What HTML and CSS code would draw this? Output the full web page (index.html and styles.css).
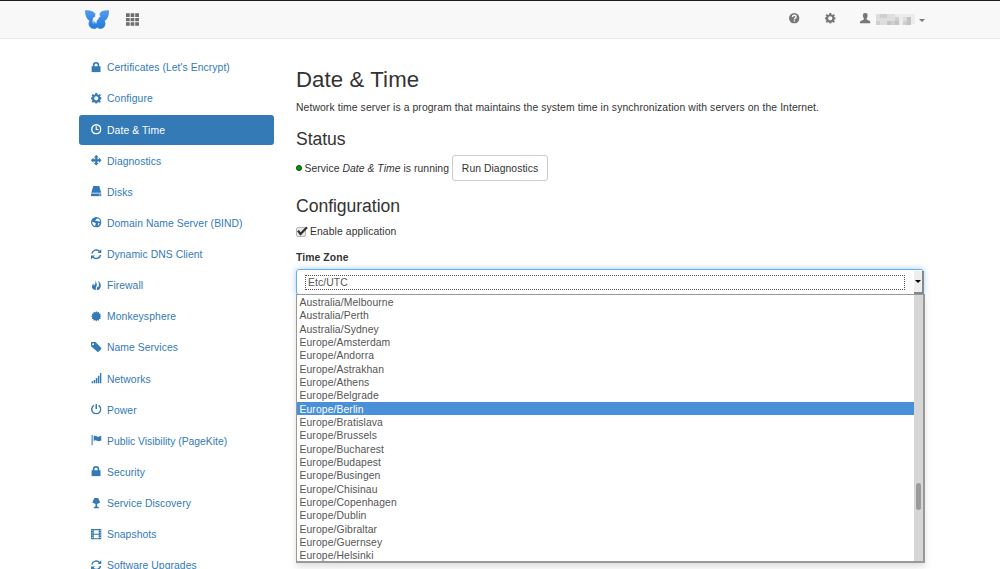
FILE: index.html
```html
<!DOCTYPE html>
<html lang="en">
<head>
<meta charset="utf-8">
<title>Date &amp; Time</title>
<link rel="stylesheet" href="styles.css">
</head>
<body>
<svg class="defs" width="0" height="0">
  <symbol id="lock" viewBox="0 0 14 14"><path d="M.8 5.800h1.600V4.300a4.300 4.300 0 0 1 8.600 0v1.500h1.700v7.700H.8zM4.600 5.800h4.200V4.200a2.100 2.100 0 0 0-4.200 0z" fill-rule="evenodd"/></symbol>
  <symbol id="cog" viewBox="0 0 14 14"><path fill-rule="evenodd" d="M5.800 0h2.400l.4 2 1.200.5 1.700-1.200 1.700 1.700L12 4.700l.5 1.100 1.900.3v2.100l-1.900.4-.5 1.100 1.200 1.800-1.700 1.600-1.700-1.100-1.200.5-.4 1.900H5.800l-.4-1.900-1.200-.5-1.700 1.100L.8 11.500 2 9.700l-.5-1.100-1.900-.4V6.100l1.900-.3L2 4.700.8 3l1.700-1.700 1.700 1.200L5.400 2zM7 4.300a2.800 2.800 0 1 0 0 5.600 2.800 2.800 0 0 0 0-5.600z"/></symbol>
  <symbol id="clock" viewBox="0 0 14 14"><circle cx="7" cy="7" r="6" fill="none" stroke="currentColor" stroke-width="1.900"/><path d="M6.200 3h1.500v3.500H10V8H6.200z"/></symbol>
  <symbol id="move" viewBox="0 0 14 14"><path fill-rule="evenodd" d="M7-.3l3.200 3.600H8.200v2.500h2.500V3.800L14.300 7l-3.600 3.200V8.200H8.200v2.500h2L7 14.300l-3.200-3.600h2V8.200H3.300v2L-.3 7l3.600-3.200v2h2.500V3.300h-2z"/><path d="M7 3.500L10.500 7 7 10.500 3.500 7z" fill="none" stroke="currentColor" stroke-width="1"/></symbol>
  <symbol id="disk" viewBox="0 0 14 14"><path d="M3 0h8l2.600 9H.4z"/><path fill-rule="evenodd" d="M0 10h14v3.500H0zM10.500 11.200v1h2v-1z"/></symbol>
  <symbol id="globe" viewBox="0 0 14 14"><path fill-rule="evenodd" d="M7 0a7 7 0 1 0 0 14A7 7 0 0 0 7 0zM8 1.500c2.500.4 4.200 2.500 4.400 4.800L11 5.500 9.700 6 8.500 4.800 6.700 5.500 5.600 4.300l1.600-1zM1.700 6.400l2.300.5 2.500 1.500-.6 1.700-.4 2.200C3 11.500 1.300 9 1.700 6.400zm7.800 1.900l2-.3c-.3 1.700-1.200 2.900-2.500 3.700z"/></symbol>
  <symbol id="refresh" viewBox="0 0 14 14"><path d="M1.200 6a5.900 5.900 0 0 1 10.200-2.700M12.800 8a5.900 5.900 0 0 1-10.200 2.700" fill="none" stroke="currentColor" stroke-width="1.900"/><path d="M14 0v5.200H8.800zM0 14V8.800h5.200z"/></symbol>
  <symbol id="fire" viewBox="0 0 14 14"><path d="M5.700 0c.5 2.500 2.400 4 2.100 6.600C7.600 8.500 6 9 6.500 13.700 3.500 13 1 11.200 1.200 8.500c.1-1.700 1.200-2.500 1.800-4 .7 1.100.9 2.300.6 3.600C5.700 6.100 6.500 3.500 5.700 0z"/><path d="M9.300 1c3.200 2.200 4.400 5 3.500 8.500-.6 2-2.200 3.600-4.700 4.300C6.900 11.600 8 10 9.200 8.300c.3.700.3 1.300.1 2C11 8 11.100 4.700 9.300 1z"/></symbol>
  <symbol id="cert" viewBox="0 0 14 14"><path d="M7 0l1.370 1.880 2.130-.94.25 2.310 2.310.25-.94 2.130L14 7l-1.880 1.370.94 2.130-2.310.25-.25 2.310-2.130-.94L7 14l-1.370-1.880-2.130.94-.25-2.310-2.310-.25.94-2.130L0 7l1.880-1.370L.94 3.500l2.310-.25L3.500.94l2.130.94z"/></symbol>
  <symbol id="tag" viewBox="0 0 14 14"><path fill-rule="evenodd" d="M0 0h6l8.500 8.500-5.200 5.300L0 5.800zM2.800 1.600a1.300 1.300 0 1 0 0 2.600 1.300 1.300 0 0 0 0-2.600z"/></symbol>
  <symbol id="signal" viewBox="0 0 14 14"><path d="M.8 11h2v3h-2zM3.600 9.300h2V14h-2zM6.400 6.500h2V14h-2zM9.200 3.500h2V14h-2zM12 0h2.200v14H12z"/></symbol>
  <symbol id="power" viewBox="0 0 14 14"><path d="M4 1.800a6 6 0 1 0 6 0" fill="none" stroke="currentColor" stroke-width="1.900"/><path d="M6 0h2v6.500H6z"/></symbol>
  <symbol id="flag" viewBox="0 0 14 14"><path d="M.8 0h1.400v14H.8zM3.500 1.500c3-2 4 1.200 6.300.8 1.600-.2 2.500-1 4.200-1.400v6.500c-2.200.8-4.100 1.600-6 .4-1.500-1-2.900-1-4.500.1z"/></symbol>
  <symbol id="lamp" viewBox="0 0 14 14"><path d="M4.500 0h5l2.700 5.500c-1 1.500-3.400 2-4 2V10c0 1.200.5 2 2.600 2.500V14H3.500v-1.500C5.600 12 6 11.200 6 10V7.500c-.8 0-3.300-.7-4.200-2z"/></symbol>
  <symbol id="film" viewBox="0 0 14 14"><path fill-rule="evenodd" d="M0 0h14v14H0zM1 1.500v1.300h1.300V1.500zm0 3v1.300h1.300V4.500zm0 3v1.300h1.300V7.500zm0 3v1.500h1.300v-1.500zM3.700 1.500v4.700h6.600V1.500zm0 6.200v4.700h6.600V7.700zm8-6.200v1.300H13V1.500zm0 3v1.300H13V4.500zm0 3v1.300H13V7.500zm0 3v1.500H13v-1.500z"/></symbol>
  <symbol id="question" viewBox="0 0 14 14"><circle cx="7" cy="7" r="7"/><path d="M4.600 5.300C4.700 2.200 9.600 2.300 9.400 5.100 9.300 6.800 7.200 6.700 7.200 8.600M7.200 9.700v1.700" fill="none" stroke="#f8f8f8" stroke-width="1.900"/></symbol>
  <symbol id="user" viewBox="0 0 14 14"><path d="M7 0c2.400 0 3.400 1.700 3.100 4-.2 1.700-.7 2.500-1.300 3.200v1.500l4.200 1.900c.8.400 1 .9 1 2.200V14H0v-1.200c0-1.300.2-1.800 1-2.200l4.200-1.900V7.200C4.600 6.500 4.100 5.700 3.900 4 3.600 1.700 4.600 0 7 0z"/></symbol>
</svg>

<header class="navbar">
  <div class="container navbar-inner">
    <svg class="brand" viewBox="0 0 24 19">
      <defs><linearGradient id="wing" x2="0" y2="1"><stop offset="0" stop-color="#549cec"/><stop offset="1" stop-color="#1f7bdd"/></linearGradient></defs>
      <path fill="url(#wing)" d="M0 .5C3-.3 7.500.6 9.500 2.800L10.800 4.500 9.800 5.600l2 .2.700 1.200.8-1.200 1.800-.3L14 4.500l1.200-1.800C17 .6 21 .1 24 .5c.2 4.500-1.200 8.300-4.400 10.400 2 2.300.4 7.300-3.600 7.900-1.900.3-3.300-.7-3.800-1.500-.8 1.300-2.100 1.800-4 1.500-4-.5-5.900-5.500-3.700-7.800C1.500 9-.1 5.200 0 .5z"/>
      <path fill="#f8f8f8" d="M9.500 4.200l1.700.8 1.200-1.200 1.400 1 1.500-.5-.6 1.500 1 .9-1.700.6-.6 1.800-1.500 1.400-.7 3.500-.5-2.500-.5 2.500-.6-3.500-.7 4-.5-4-1 3 .5-5 1.400-1.500 1.400-1z"/>
    </svg>
    <svg class="apps" viewBox="0 0 13 13"><path d="M0 .3h3.700V4H0zm4.600 0h3.700V4H4.600zm4.600 0H13V4H9.200zM0 4.900h3.700v3.400H0zm4.600 0h3.700v3.400H4.600zm4.600 0H13v3.400H9.200zM0 9.200h3.700v3.500H0zm4.600 0h3.700v3.500H4.600zm4.600 0H13v3.500H9.200z"/></svg>
    <div class="navbar-right">
      <svg class="icon"><use href="#question"/></svg>
      <svg class="icon"><use href="#cog"/></svg>
      <div class="account">
        <svg class="icon"><use href="#user"/></svg>
        <svg class="masked" viewBox="0 0 39 11"><path fill="#dedede" d="M0 0h31v11H0z"/><path fill="#d0d0d0" d="M4 0h7v4H4zM0 7h4v4H0zM15 7h4v4h-4zM27 7h8v4h-8zM19 3h4v4h-4z"/><path fill="#c3c3c3" d="M11 7h4v4h-4zM19 7h4v4h-4zM31 3h4v8h-4z"/><path fill="#ececec" d="M19 0h20v3H19zM23 3h4v8h-4zM35 3h4v7h-4z"/></svg>
        <span class="caret"></span>
      </div>
    </div>
  </div>
</header>

<div class="container page">
  <nav class="sidebar">
    <a class="item narrow"><svg class="icon"><use href="#lock"/></svg>Certificates (Let's Encrypt)</a>
    <a class="item"><svg class="icon"><use href="#cog"/></svg>Configure</a>
    <a class="item active"><svg class="icon"><use href="#clock"/></svg>Date &amp; Time</a>
    <a class="item narrow"><svg class="icon"><use href="#move"/></svg>Diagnostics</a>
    <a class="item narrow"><svg class="icon"><use href="#disk"/></svg>Disks</a>
    <a class="item narrow"><svg class="icon"><use href="#globe"/></svg>Domain Name Server (BIND)</a>
    <a class="item narrow"><svg class="icon"><use href="#refresh"/></svg>Dynamic DNS Client</a>
    <a class="item narrow"><svg class="icon"><use href="#fire"/></svg>Firewall</a>
    <a class="item"><svg class="icon"><use href="#cert"/></svg>Monkeysphere</a>
    <a class="item narrow"><svg class="icon"><use href="#tag"/></svg>Name Services</a>
    <a class="item narrow"><svg class="icon"><use href="#signal"/></svg>Networks</a>
    <a class="item narrow"><svg class="icon"><use href="#power"/></svg>Power</a>
    <a class="item narrowest"><svg class="icon"><use href="#flag"/></svg>Public Visibility (PageKite)</a>
    <a class="item narrow"><svg class="icon"><use href="#lock"/></svg>Security</a>
    <a class="item narrow"><svg class="icon"><use href="#lamp"/></svg>Service Discovery</a>
    <a class="item narrow"><svg class="icon"><use href="#film"/></svg>Snapshots</a>
    <a class="item narrow"><svg class="icon"><use href="#refresh"/></svg>Software Upgrades</a>
  </nav>

  <main class="content">
    <h2>Date &amp; Time</h2>
    <p class="intro">Network time server is a program that maintains the system time in synchronization with servers on the Internet.</p>
    <h3>Status</h3>
    <div class="status">
      <span class="dot"></span>
      <span class="status-text">Service <em>Date &amp; Time</em> is running</span>
      <button class="btn">Run Diagnostics</button>
    </div>
    <h3>Configuration</h3>
    <label class="check">
      <svg class="checkbox" viewBox="0 0 12 11"><rect x=".5" y="1.500" width="9" height="9" rx="1.500" fill="#e8e8e8" stroke="#b5b5b5"/><path d="M2 4.700l2.500 3.300L11 1.200" fill="none" stroke="#2e3436" stroke-width="2.200"/></svg>
      Enable application
    </label>
    <div class="label">Time Zone</div>
    <div class="select">
      <div class="select-value">Etc/UTC</div>
      <div class="select-button"></div>
      <div class="popup">
        <ul class="options">
          <li>Australia/Melbourne</li>
          <li>Australia/Perth</li>
          <li>Australia/Sydney</li>
          <li>Europe/Amsterdam</li>
          <li>Europe/Andorra</li>
          <li>Europe/Astrakhan</li>
          <li>Europe/Athens</li>
          <li>Europe/Belgrade</li>
          <li class="selected">Europe/Berlin</li>
          <li>Europe/Bratislava</li>
          <li>Europe/Brussels</li>
          <li>Europe/Bucharest</li>
          <li>Europe/Budapest</li>
          <li>Europe/Busingen</li>
          <li>Europe/Chisinau</li>
          <li>Europe/Copenhagen</li>
          <li>Europe/Dublin</li>
          <li>Europe/Gibraltar</li>
          <li>Europe/Guernsey</li>
          <li>Europe/Helsinki</li>
        </ul>
        <div class="scrollbar"><div class="thumb"></div></div>
      </div>
    </div>
  </main>
</div>
</body>
</html>
```

FILE: styles.css
```css
* { box-sizing: border-box; }
html, body { height: 569px; overflow: hidden; }
body {
  margin: 0;
  background: #fff;
  color: #333;
  font-family: "Liberation Sans", Arial, sans-serif;
  font-size: 10.37px;
  letter-spacing: 0.1px;
  line-height: 15px;
}
.defs { display: block; position: absolute; }
.container { width: 845px; margin-left: 79px; }
.icon { width: 10.5px; height: 10.5px; fill: currentColor; flex: none; overflow: visible; }

.navbar { height: 39px; background: #f8f8f8; border-top: 1px solid #1d1a20; border-bottom: 1px solid #e7e7e7; }
.navbar-inner { display: flex; align-items: center; height: 36px; padding-left: 6px; }
.brand { width: 24px; height: 19px; margin-top: 1px; }
.apps { width: 13px; height: 13px; margin-left: 17px; fill: #6e6e6e; }
.navbar-right { display: flex; align-items: center; gap: 25px; margin: -1px -0.5px 0 auto; color: #777; }
.account { display: flex; align-items: center; }
.masked { width: 39px; height: 11px; margin: 2px 0 0 5px; }
.caret { margin: 4px 0 0 4px; border: 3px solid transparent; border-top-color: #777; border-bottom: 0; }

.page { display: flex; padding-top: 14px; }
.sidebar { display: flex; flex-direction: column; gap: 1.5px; width: 194.500px; flex: none; }
.item { display: flex; align-items: center; gap: 6px; height: 29.63px; flex: none; padding: 0 0 0 11.5px; border-radius: 3px; color: #337ab7; }
.item .icon { margin-top: -1.5px; }
.narrow { letter-spacing: 0.06px; }
.narrowest { letter-spacing: 0; }
.active { background: #337ab7; color: #fff; }

.content { width: 628px; margin-left: 22.500px; padding-top: 12px; }
h2, h3 { margin: 0; font-weight: normal; letter-spacing: 0; }
h2 { font-size: 22.200px; line-height: 29px; letter-spacing: 0.1px; }
h3 { font-size: 17.600px; line-height: 22px; letter-spacing: -0.05px; }
.intro { margin: 6px 0 13px; white-space: nowrap; }
.status { display: flex; align-items: center; margin: 5px 0 14px; letter-spacing: 0.06px; }
.dot { width: 6px; height: 6px; border-radius: 50%; background: #00a000; border: 1px solid #064006; margin-right: 2.5px; }
.btn { width: 96px; height: 26px; margin-left: 3px; padding: 0; background: #fff; border: 1px solid #ccc; border-radius: 3px; color: #333; font: inherit; letter-spacing: inherit; }
.check { display: flex; align-items: center; gap: 2px; margin-top: 7px; }
.checkbox { width: 12px; height: 11px; }
.label { margin-top: 11px; font-weight: bold; }

.select { position: relative; display: flex; align-items: center; height: 26px; margin-top: 4px; border: 1px solid #66afe9; border-radius: 3px; box-shadow: 0 0 6px rgba(102, 175, 233, .6); color: #555; }
.select-value { width: 600px; height: 15px; margin-left: 8px; padding-left: 2px; border: 1px dotted #555; line-height: 13px; }
.select-button { display: flex; align-items: center; justify-content: center; width: 10px; height: 23px; margin: 0 -1px 0 auto; background: #ededed; border-right: 2px solid #888; border-bottom: 2px solid #888; }
.select-button::after { content: ""; border: 3px solid transparent; border-top-color: #000; border-bottom: 0; }
.popup { position: absolute; top: 24px; left: -1px; display: flex; width: 629px; height: 269px; background: #fff; border: 1px solid #999; border-right-width: 2px; border-bottom-width: 2px; box-shadow: 0 4px 6px rgba(0, 0, 0, .12); }
.options { flex: 1; margin: 0; padding: 0; list-style: none; }
.options li { height: 13.33px; padding-left: 2.500px; line-height: 15px; white-space: nowrap; }
.options .selected { background: #4a90d9; color: #fff; }
.scrollbar { width: 9px; padding: 188px 0 0 2px; background: #d6d6d6; }
.thumb { width: 5px; height: 27px; border-radius: 3px; background: #999b9c; }
```
